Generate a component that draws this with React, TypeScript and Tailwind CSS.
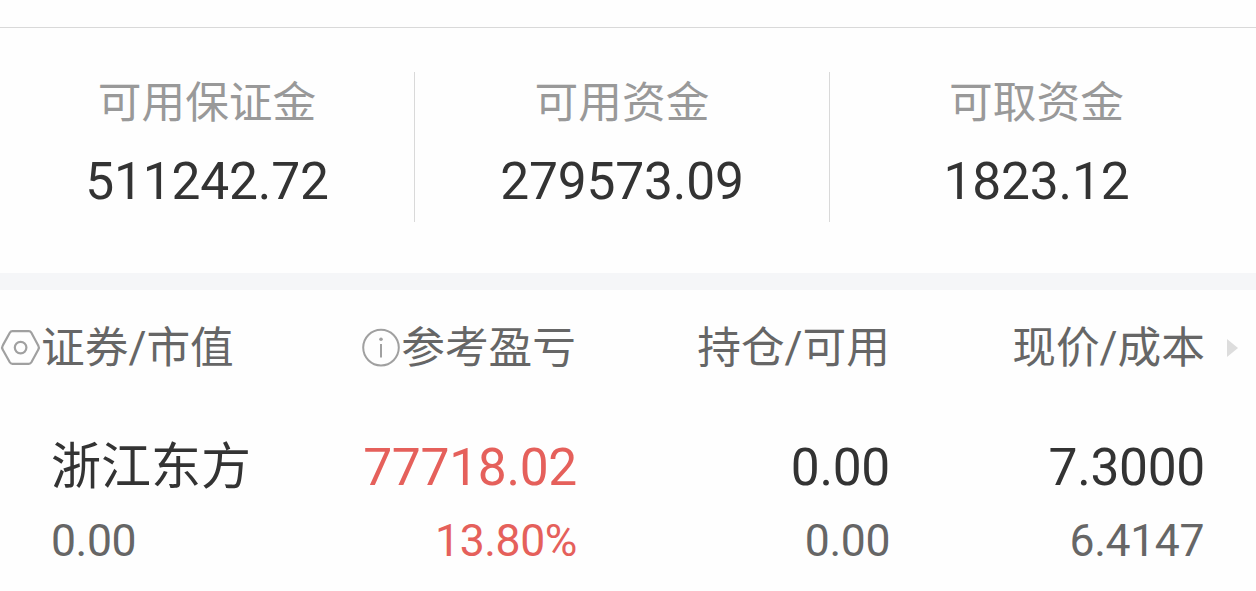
type Summary = { label: string; value: string };

const summaries: Summary[] = [
  { label: "可用保证金", value: "511242.72" },
  { label: "可用资金", value: "279573.09" },
  { label: "可取资金", value: "1823.12" },
];

function HexIcon() {
  return (
    <svg className="h-[38px] w-[41px] shrink-0" viewBox="0 0 41 38" fill="none" stroke="#a0a0a0" strokeWidth="2.2">
      <path d="M12.4 2.2H28.8Q30.5 2.2 31.4 3.7L38.2 16.4Q39.6 18.6 38.2 20.8L31.4 33.3Q30.5 34.8 28.8 34.8H12.4Q10.7 34.8 9.8 33.3L2.8 20.8Q1.4 18.6 2.8 16.4L9.8 3.7Q10.7 2.2 12.4 2.2Z" />
      <circle cx="20.6" cy="18.6" r="5.8" />
    </svg>
  );
}

function InfoIcon() {
  return (
    <svg className="h-[40px] w-[40px] shrink-0" viewBox="0 0 40 40" fill="none">
      <circle cx="20" cy="19.6" r="17.8" stroke="#a0a0a0" strokeWidth="2" />
      <circle cx="20" cy="11.2" r="1.8" fill="#a0a0a0" />
      <path d="M20 16V29.5" stroke="#a0a0a0" strokeWidth="2" />
    </svg>
  );
}

export default function App() {
  return (
    <div className='flex h-[591px] w-[1256px] flex-col overflow-hidden bg-[#fefefe] font-["Roboto","Noto_Sans_CJK_SC",sans-serif] text-[#333333]'>
      <div className="h-7 shrink-0 border-b border-[#d9d9d9]" />

      <section className="flex h-[245px] shrink-0 pt-11">
        {summaries.map((item, i) => (
          <div
            key={item.label}
            className={
              i < 2
                ? "flex h-[150px] w-[415px] flex-col items-center border-r border-[#d9d9d9] pt-px"
                : "flex h-[150px] w-[413px] flex-col items-center pt-px"
            }
          >
            <div className="text-[43.7px] leading-[60px] text-[#999999]">{item.label}</div>
            <div className="mt-[17px] text-[51.5px] leading-[64px] tracking-[-0.2px]">{item.value}</div>
          </div>
        ))}
      </section>

      <div className="h-[17px] shrink-0 bg-[#f5f6f8]" />

      <section className="flex flex-col pt-7">
        <div className="flex h-[60px] items-center text-[43.7px] leading-[60px] whitespace-nowrap text-[#666666]">
          <div className="flex w-[260px] items-center">
            <HexIcon />
            <span>证券/市值</span>
          </div>
          <div className="flex w-[316px] items-center justify-end">
            <InfoIcon />
            <span>参考盈亏</span>
          </div>
          <div className="w-[314px] text-right">持仓/可用</div>
          <div className="w-[315px] text-right">现价/成本</div>
          <svg className="ml-[22px] h-[18px] w-[11px]" viewBox="0 0 11 18">
            <path d="M0 0L11 9L0 18Z" fill="#dddddd" />
          </svg>
        </div>

        <div className="mt-[58px] flex text-[51.5px] leading-[64px] tracking-[-0.3px] whitespace-nowrap">
          <div className="-mt-px w-[260px] pl-[51px] text-[50px] tracking-normal">浙江东方</div>
          <div className="w-[317px] text-right text-[#e5605b]">77718.02</div>
          <div className="w-[313px] text-right">0.00</div>
          <div className="w-[315px] text-right">7.3000</div>
        </div>
        <div className="mt-[11px] flex text-[44.5px] leading-[60px] tracking-[-0.4px] whitespace-nowrap text-[#666666]">
          <div className="w-[260px] pl-[51px]">0.00</div>
          <div className="w-[317px] text-right text-[#e5605b]">13.80%</div>
          <div className="w-[313px] text-right">0.00</div>
          <div className="w-[314px] text-right">6.4147</div>
        </div>
      </section>
    </div>
  );
}
